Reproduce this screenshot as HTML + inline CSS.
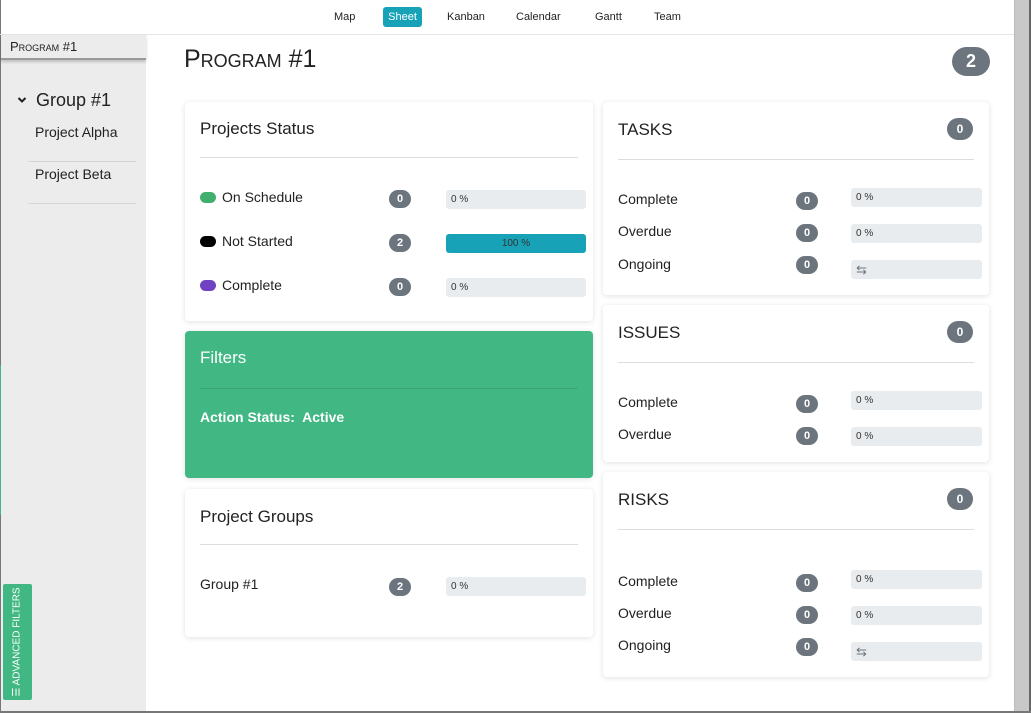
<!DOCTYPE html>
<html><head><meta charset="utf-8"><style>
*{box-sizing:border-box;margin:0;padding:0}
body{width:1031px;height:713px;overflow:hidden;background:#fff;font-family:"Liberation Sans",sans-serif;color:#222;position:relative}
.a{position:absolute}
.nav{font-size:11px;color:#222;top:11px}
.card{position:absolute;background:#fff;border-radius:4px;box-shadow:0 1px 6px rgba(0,0,0,.12)}
.hr{position:absolute;height:1px;background:#ddd}
.t{position:absolute;font-size:17px;color:#222}
.lbl{position:absolute;font-size:14px;color:#222}
.b{position:absolute;width:22px;height:18px;border-radius:9px;background:#6c757d;color:#fff;font-size:11px;font-weight:bold;text-align:center;line-height:18px}
.bar{position:absolute;height:19px;border-radius:3px;background:#e9ecef;font-size:10px;padding-left:5px;line-height:19px;color:#333}
.dot{display:inline-block;width:16px;height:11px;border-radius:6px;margin-right:6px;vertical-align:-1px}
</style></head><body>
<div class="a" style="left:0;top:0;width:1px;height:713px;background:#777"></div>
<div class="a" style="left:0;top:365px;width:2px;height:150px;background:#41b883"></div>
<div class="a" style="left:0;top:34px;width:1014px;height:1px;background:#e5e5e5"></div>
<div class="a nav" style="left:334px">Map</div>
<div class="a" style="left:383px;top:7px;width:39px;height:20px;background:#17a2b8;border-radius:3px;color:#fff;font-size:11px;text-align:center;line-height:20px">Sheet</div>
<div class="a nav" style="left:447px">Kanban</div>
<div class="a nav" style="left:516px">Calendar</div>
<div class="a nav" style="left:595px">Gantt</div>
<div class="a nav" style="left:654px">Team</div>
<!-- sidebar -->
<div class="a" style="left:1px;top:35px;width:145px;height:676px;background:#ececec"></div>
<div class="a" style="left:1px;top:35px;width:145px;height:25px;background:#ececec;border-bottom:2px solid #999;box-shadow:0 2px 3px rgba(0,0,0,.2)"></div>
<div class="a" style="left:10px;top:39px;font-size:13px;font-variant:small-caps">Program #1</div>
<svg class="a" style="left:17px;top:96px" width="10" height="8" viewBox="0 0 10 8"><path d="M1.5 2 L5 5.5 L8.5 2" fill="none" stroke="#222" stroke-width="2"/></svg>
<div class="a" style="left:36px;top:90px;font-size:18px">Group #1</div>
<div class="a" style="left:35px;top:124px;font-size:14px">Project Alpha</div>
<div class="a" style="left:28px;top:161px;width:108px;height:1px;background:#d5d5d5"></div>
<div class="a" style="left:35px;top:166px;font-size:14px">Project Beta</div>
<div class="a" style="left:28px;top:203px;width:108px;height:1px;background:#d5d5d5"></div>
<div class="a" style="left:3px;top:584px;width:29px;height:116px;background:#41b883;border-radius:2px"></div>
<div class="a" style="left:17px;top:642px;transform:translate(-50%,-50%) rotate(-90deg);color:#fff;font-size:10px;white-space:nowrap">☰ ADVANCED FILTERS</div>
<!-- scrollbar -->
<div class="a" style="left:1014px;top:0;width:17px;height:713px;background:#c8c8c8;border-left:1px solid #bbb;border-right:2px solid #666"></div>
<div class="a" style="left:0;top:711px;width:1031px;height:2px;background:#777"></div>
<!-- header -->
<div class="a" style="left:184px;top:45px;font-size:25px;font-variant:small-caps;color:#222">Program #1</div>
<div class="a" style="left:952px;top:47px;width:38px;height:29px;border-radius:15px;background:#6c757d;color:#fff;font-weight:bold;font-size:18px;text-align:center;line-height:29px">2</div>
<!-- Projects status -->
<div class="card" style="left:185px;top:102px;width:408px;height:219px"></div>
<div class="t" style="left:200px;top:119px">Projects Status</div>
<div class="hr" style="left:200px;top:157px;width:378px"></div>
<div class="lbl" style="left:200px;top:189px"><span class="dot" style="background:#41b06e"></span>On Schedule</div>
<div class="lbl" style="left:200px;top:233px"><span class="dot" style="background:#000"></span>Not Started</div>
<div class="lbl" style="left:200px;top:277px"><span class="dot" style="background:#6f42c1"></span>Complete</div>
<div class="b" style="left:389px;top:190px">0</div>
<div class="b" style="left:389px;top:234px">2</div>
<div class="b" style="left:389px;top:278px">0</div>
<div class="bar" style="left:446px;top:190px;width:140px">0 %</div>
<div class="bar" style="left:446px;top:234px;width:140px;background:#17a2b8;text-align:center;padding:0">100 %</div>
<div class="bar" style="left:446px;top:278px;width:140px">0 %</div>
<!-- Filters -->
<div class="card" style="left:185px;top:331px;width:408px;height:147px;background:#41b883"></div>
<div class="t" style="left:200px;top:348px;color:#fff">Filters</div>
<div class="hr" style="left:200px;top:388px;width:378px;background:#3aa574"></div>
<div class="a" style="left:200px;top:409px;font-size:14px;color:#fff;font-weight:bold">Action Status:&nbsp; Active</div>
<!-- Project groups -->
<div class="card" style="left:185px;top:489px;width:408px;height:148px"></div>
<div class="t" style="left:200px;top:507px">Project Groups</div>
<div class="hr" style="left:200px;top:544px;width:378px"></div>
<div class="lbl" style="left:200px;top:576px">Group #1</div>
<div class="b" style="left:389px;top:578px">2</div>
<div class="bar" style="left:446px;top:577px;width:140px">0 %</div>
<!-- Tasks -->
<div class="card" style="left:603px;top:102px;width:386px;height:193px"></div>
<div class="t" style="left:618px;top:120px">TASKS</div>
<div class="b" style="left:947px;top:118px;width:26px;height:22px;border-radius:11px;line-height:22px;font-size:12px">0</div>
<div class="hr" style="left:618px;top:159px;width:356px"></div>
<div class="lbl" style="left:618px;top:191px">Complete</div>
<div class="lbl" style="left:618px;top:223px">Overdue</div>
<div class="lbl" style="left:618px;top:256px">Ongoing</div>
<div class="b" style="left:796px;top:192px">0</div>
<div class="b" style="left:796px;top:224px">0</div>
<div class="b" style="left:796px;top:256px">0</div>
<div class="bar" style="left:851px;top:188px;width:131px">0 %</div>
<div class="bar" style="left:851px;top:224px;width:131px">0 %</div>
<div class="bar" style="left:851px;top:260px;width:131px;color:#6c757d;font-size:13px">⇆</div>
<!-- Issues -->
<div class="card" style="left:603px;top:305px;width:386px;height:157px"></div>
<div class="t" style="left:618px;top:323px">ISSUES</div>
<div class="b" style="left:947px;top:321px;width:26px;height:22px;border-radius:11px;line-height:22px;font-size:12px">0</div>
<div class="hr" style="left:618px;top:362px;width:356px"></div>
<div class="lbl" style="left:618px;top:394px">Complete</div>
<div class="lbl" style="left:618px;top:426px">Overdue</div>
<div class="b" style="left:796px;top:395px">0</div>
<div class="b" style="left:796px;top:427px">0</div>
<div class="bar" style="left:851px;top:391px;width:131px">0 %</div>
<div class="bar" style="left:851px;top:427px;width:131px">0 %</div>
<!-- Risks -->
<div class="card" style="left:603px;top:472px;width:386px;height:205px"></div>
<div class="t" style="left:618px;top:490px">RISKS</div>
<div class="b" style="left:947px;top:488px;width:26px;height:22px;border-radius:11px;line-height:22px;font-size:12px">0</div>
<div class="hr" style="left:618px;top:529px;width:356px"></div>
<div class="lbl" style="left:618px;top:573px">Complete</div>
<div class="lbl" style="left:618px;top:605px">Overdue</div>
<div class="lbl" style="left:618px;top:637px">Ongoing</div>
<div class="b" style="left:796px;top:574px">0</div>
<div class="b" style="left:796px;top:606px">0</div>
<div class="b" style="left:796px;top:638px">0</div>
<div class="bar" style="left:851px;top:570px;width:131px">0 %</div>
<div class="bar" style="left:851px;top:606px;width:131px">0 %</div>
<div class="bar" style="left:851px;top:642px;width:131px;color:#6c757d;font-size:13px">⇆</div>
</body></html>
